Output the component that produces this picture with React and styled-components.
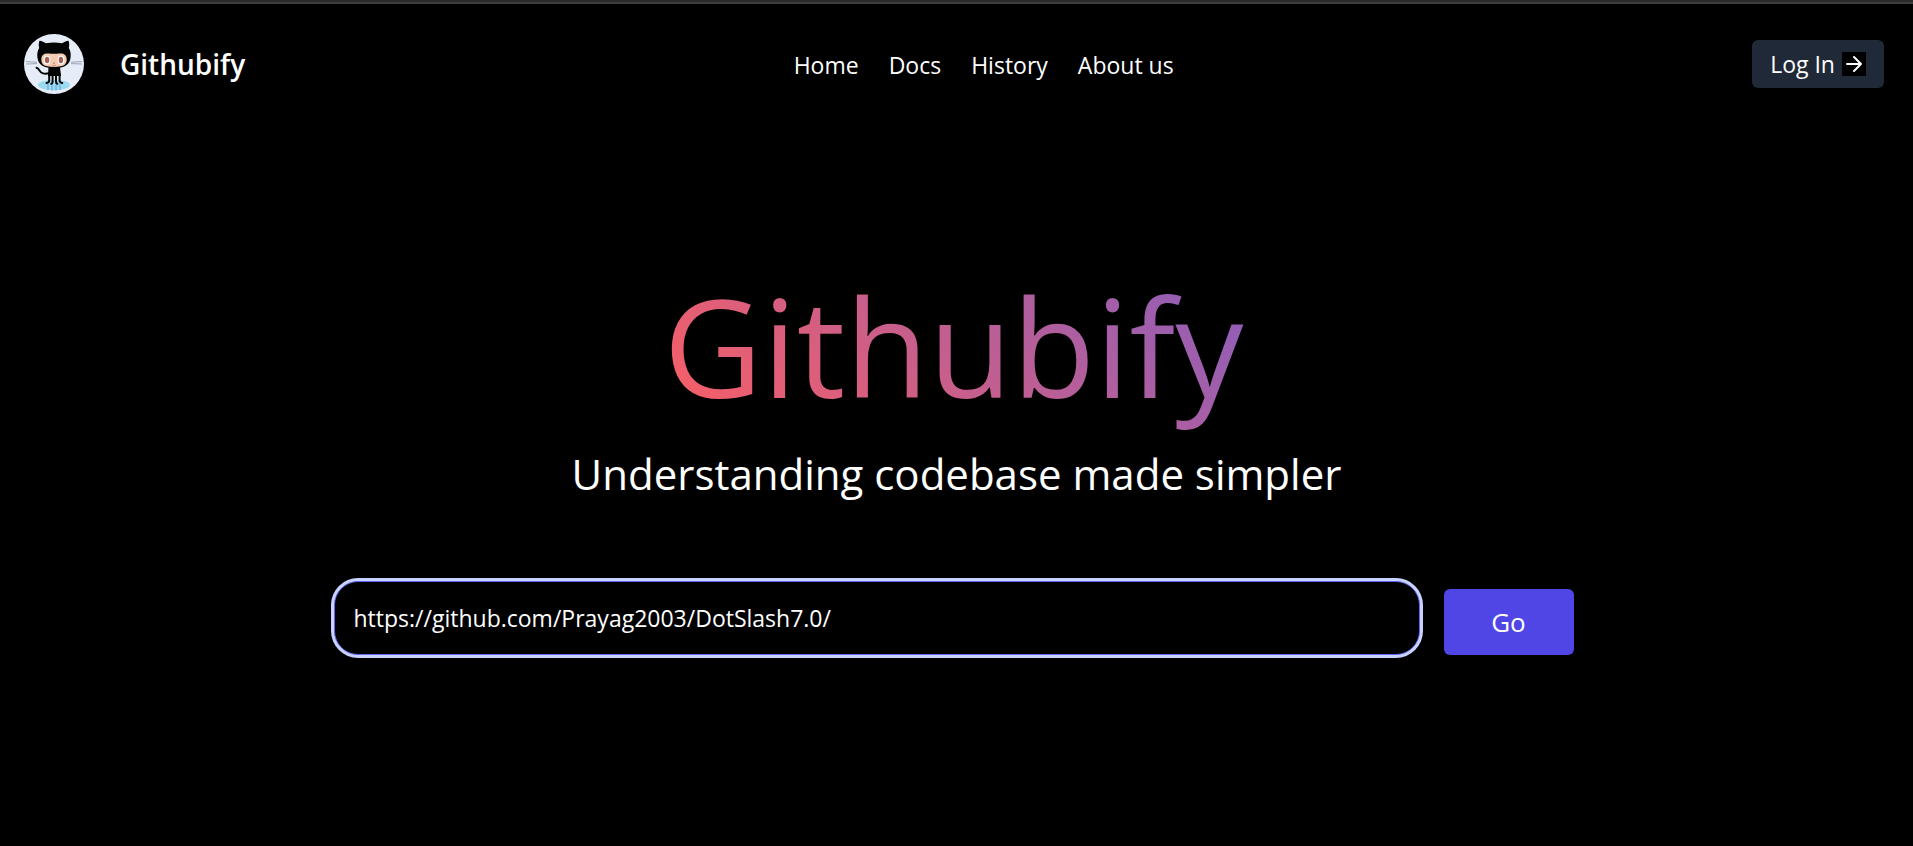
import React, { useState } from "react";
import styled, { createGlobalStyle } from "styled-components";

const GlobalStyle = createGlobalStyle`
  *, *::before, *::after { box-sizing: border-box; }
  body {
    margin: 0;
    background: #000;
    color: #fff;
    font-family: "Open Sans", "Noto Sans", sans-serif;
    font-size: 23px;
    line-height: 36px;
  }
  button, input { font: inherit; color: inherit; }
`;

const Page = styled.div`
  min-height: 100vh;
  border-top: 2px solid #2b2b2b;
`;

const Header = styled.header`
  display: flex;
  justify-content: space-between;
  align-items: center;
  padding: 30px 29px 30px 24px;
  border-top: 2px solid #3e3e3e;
`;

const Brand = styled.a`
  display: flex;
  align-items: center;
  gap: 36px;
  color: inherit;
  font-size: 28px;
  font-weight: 600;
  text-decoration: none;
`;

const Avatar = styled.svg`
  display: block;
  width: 60px;
  height: 60px;
  border-radius: 50%;
`;

const Nav = styled.nav`
  display: flex;
  gap: 30px;
  padding-top: 2px;
`;

const NavLink = styled.a`
  color: inherit;
  text-decoration: none;
`;

const LoginButton = styled.button`
  display: flex;
  align-items: center;
  gap: 7px;
  margin-left: 30px;
  padding: 6px 18px;
  border: 0;
  border-radius: 6px;
  background: #1f2937;
  cursor: pointer;
`;

const ArrowIcon = styled.svg`
  width: 24px;
  height: 24px;
  background: #000;
`;

const Hero = styled.main`
  display: flex;
  flex-direction: column;
  align-items: center;
  padding: 123px 24px 48px;
`;

const Title = styled.h1`
  margin: 0;
  padding: 0 12px 0 6px;
  background: linear-gradient(45deg, #ff5f5f, #845ec2);
  background-clip: text;
  -webkit-background-clip: text;
  color: transparent;
  font-size: 136px;
  font-weight: 400;
  line-height: 198px;
`;

const Subtitle = styled.p`
  margin: 0;
  font-size: 42px;
  line-height: 58px;
`;

const SearchForm = styled.form`
  display: flex;
  align-items: flex-end;
  gap: 24px;
  width: 100%;
  max-width: 1246px;
  margin-top: 78px;
  padding-right: 6px;
`;

const UrlInput = styled.input`
  flex: 1;
  min-width: 0;
  height: 74px;
  padding: 0 19px;
  border: 1px solid #6366f1;
  border-radius: 24px;
  outline: none;
  background: #000;
  box-shadow: 0 0 0 3px #c7d2fe;
`;

const GoButton = styled.button`
  width: 130px;
  height: 66px;
  border: 0;
  border-radius: 6px;
  background: #4f46e5;
  font-size: 26px;
  cursor: pointer;
`;

const links = ["Home", "Docs", "History", "About us"];

function Octocat() {
  return (
    <Avatar viewBox="0 0 60 60" aria-hidden="true">
      <rect width="60" height="60" fill="#e7edf8" />
      <ellipse cx="30" cy="51" rx="16" ry="5.3" fill="#9cdaf1" />
      <path d="M24 50v6M28 51v5.500M32 51v5.500M36 50v6" stroke="#7db9e3" strokeWidth="1.800" />
      <path d="M2 27.600L13 28.200M2 30L13 29.600M58 27.600L47 28.200M58 30L47 29.600" stroke="#7c8494" strokeWidth=".7" />
      <path d="M12.500 33.800c3.500.8 2.500 4.700 6.500 5.600 2 .5 4 .4 6.500-.4" fill="none" stroke="#050505" strokeWidth="1.900" strokeLinecap="round" />
      <path d="M24.500 33h11.500l1 9H24z" fill="#050505" />
      <g fill="none" stroke="#050505" strokeWidth="2" strokeLinecap="round">
        <path d="M25.200 40v6.500c0 1.500-.8 2.200-2.600 2.500" />
        <path d="M28.600 40v7.500c0 1.200-.5 2-1.300 2.300" />
        <path d="M32 40v7.500c0 1.200.5 2 1.300 2.300" />
        <path d="M35.600 40v6.500c0 1.500.8 2.200 2.600 2.500" />
      </g>
      <path
        d="M15.400 6.800c2.600.2 4.800 1.400 6.600 2.500 5-1 11-1 16 0 1.800-1.100 4-2.300 6.600-2.500.8 2.600.8 5 .2 7.200 1.700 2.600 2.200 5.600 1.800 9.300C45.900 31 40.500 34.200 30 34.200S14.100 31 13.400 23.300c-.4-3.700.1-6.700 1.800-9.300-.6-2.200-.6-4.600.2-7.200z"
        fill="#050505"
      />
      <path
        d="M22 19.600c3-.3 5 .2 8 .2s5-.5 8-.2c3 .3 4.700 2.900 4.700 6 0 5.800-4.200 7.400-12.700 7.400s-12.700-1.600-12.700-7.400c0-3.100 1.700-5.700 4.700-6z"
        fill="#f4cbb2"
      />
      <g fill="#fff">
        <ellipse cx="23" cy="26" rx="3.400" ry="4.500" />
        <ellipse cx="37" cy="26" rx="3.400" ry="4.500" />
      </g>
      <g fill="#ad5c51">
        <ellipse cx="23.100" cy="26" rx="2.200" ry="3.200" />
        <ellipse cx="36.900" cy="26" rx="2.200" ry="3.200" />
        <circle cx="30" cy="29.300" r=".7" />
      </g>
      <path d="M28.300 31c.8 1.200 2.600 1.200 3.400 0" fill="none" stroke="#ad5c51" strokeWidth=".7" />
    </Avatar>
  );
}

export default function App() {
  const [url, setUrl] = useState("https://github.com/Prayag2003/DotSlash7.0/");

  return (
    <Page>
      <GlobalStyle />
      <Header>
        <Brand href="#">
          <Octocat />
          Githubify
        </Brand>
        <Nav>
          {links.map((label) => (
            <NavLink key={label} href="#">{label}</NavLink>
          ))}
        </Nav>
        <LoginButton type="button">
          Log In
          <ArrowIcon viewBox="0 0 24 24" fill="none" stroke="#fff" strokeWidth="2" strokeLinecap="round" strokeLinejoin="round" aria-hidden="true">
            <path d="M5 12h14M12 5l7 7-7 7" />
          </ArrowIcon>
        </LoginButton>
      </Header>
      <Hero>
        <Title>Githubify</Title>
        <Subtitle>Understanding codebase made simpler</Subtitle>
        <SearchForm onSubmit={(event) => event.preventDefault()}>
          <UrlInput
            type="text"
            aria-label="Repository URL"
            value={url}
            onChange={(event) => setUrl(event.target.value)}
          />
          <GoButton type="submit">Go</GoButton>
        </SearchForm>
      </Hero>
    </Page>
  );
}
